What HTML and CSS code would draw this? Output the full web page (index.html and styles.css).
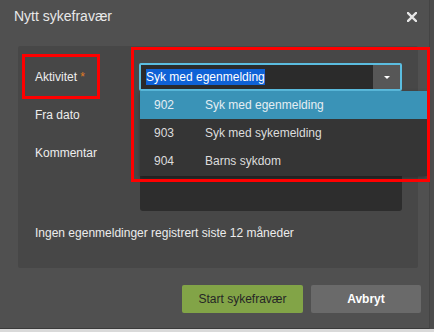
FILE: index.html
```html
<!DOCTYPE html>
<html lang="no">
<head>
  <meta charset="utf-8" />
  <title>Nytt sykefravær</title>
  <link rel="stylesheet" href="styles.css">
</head>
<body>
  <div class="dialog">
    <div class="dialog-header">
      <span class="dialog-title">Nytt sykefravær</span>
      <span class="dialog-close">
        <svg width="10" height="10" viewBox="0 0 10 10"><path d="M1 1 L9 9 M9 1 L1 9" stroke="#e6e6e6" stroke-width="2.4" stroke-linecap="square"/></svg>
      </span>
    </div>

    <div class="dialog-body">
      <div class="form">
        <div class="field-label">Aktivitet <span class="req">*</span></div>
        <div class="select-wrap">
          <div class="select">
            <span class="select-value"><span class="sel">Syk med egenmelding</span></span>
            <span class="select-btn"><span class="caret"></span></span>
          </div>
          <ul class="options">
            <li class="option active"><span class="code">902</span>Syk med egenmelding</li>
            <li class="option"><span class="code">903</span>Syk med sykemelding</li>
            <li class="option"><span class="code">904</span>Barns sykdom</li>
          </ul>
        </div>

        <div class="field-label">Fra dato</div>
        <div class="input"></div>

        <div class="field-label top">Kommentar</div>
        <div class="textarea"></div>
      </div>
      <p class="note">Ingen egenmeldinger registrert siste 12 måneder</p>
    </div>

    <div class="dialog-footer">
      <button class="btn btn-ok">Start sykefravær</button>
      <button class="btn btn-cancel">Avbryt</button>
    </div>

    <!-- annotation boxes -->
    <div class="mark mark-label"></div>
    <div class="mark mark-list"></div>
  </div>
</body>
</html>
```

FILE: styles.css
```css
* {
  margin: 0;
  padding: 0;
  box-sizing: border-box;
}

body {
  width: 434px;
  height: 332px;
  overflow: hidden;
  font-family: "Liberation Sans", Arial, sans-serif;
  font-size: 12px;
  color: #ececec;
  background: linear-gradient(to bottom, #4c4c4c 329px, #d9d9d9 329px);
}

.dialog {
  position: relative;
  width: 430px;
  height: 329px;
  background-color: #505050;
  border-right: 1px solid #444;
  border-bottom: 1px solid #3a3a3a;
}

.dialog-header {
  height: 46px;
  display: flex;
  justify-content: space-between;
  align-items: flex-start;
  padding: 6px 12px 0 14px;
}

.dialog-title {
  font-size: 14px;
  line-height: 20px;
  color: #e8e8e8;
}

.dialog-close {
  display: flex;
  margin-top: 6px;
}

.dialog-body {
  margin-left: 18px;
  width: 400px;
  height: 222px;
  background-color: #474747;
  border-radius: 2px;
  padding: 17px 0 0 17px;
}

.form {
  display: grid;
  grid-template-columns: 105px 262px;
  row-gap: 10px;
}

.field-label {
  line-height: 28px;
  color: #eeeeee;
}

.field-label.top {
  line-height: 15px;
  padding-top: 7px;
}

.req {
  color: #e07b24;
}

.select-wrap {
  position: relative;
  margin-left: -1px;
}

.select {
  height: 28px;
  display: flex;
  background-color: #2b2b2b;
  border: 2px solid #5bbde0;
  border-radius: 2px;
}

.select-value {
  flex: 1;
  padding-left: 5px;
  line-height: 24px;
}

.sel {
  background-color: #0f62d6;
  color: #fff;
  padding: 1px 0;
}

.select-btn {
  width: 27px;
  background-color: #575757;
  display: flex;
  align-items: center;
  justify-content: center;
}

.caret {
  width: 0;
  height: 0;
  border-left: 3px solid transparent;
  border-right: 3px solid transparent;
  border-top: 3px solid #fff;
}

.options {
  list-style: none;
  position: absolute;
  top: 28px;
  left: 1px;
  width: 287px;
  background-color: #353535;
  padding-bottom: 1px;
  box-shadow: 0 2px 4px rgba(0, 0, 0, 0.35);
  z-index: 2;
}

.option {
  height: 28px;
  line-height: 28px;
  padding-left: 14px;
  color: #dddddd;
}

.option.active {
  background-color: #3a93b7;
  color: #e4eef3;
}

.code {
  display: inline-block;
  width: 51px;
}

.input {
  height: 28px;
  background-color: #2d2d2d;
  border-radius: 2px;
}

.textarea {
  height: 72px;
  background-color: #2d2d2d;
  border-radius: 3px;
}

.note {
  margin-top: 15px;
  line-height: 15px;
  color: #ececec;
}

.dialog-footer {
  display: flex;
  justify-content: flex-end;
  gap: 8px;
  padding: 17px 8px 0 0;
}

.btn {
  height: 28px;
  border: none;
  border-radius: 2px;
  font-family: "Liberation Sans", Arial, sans-serif;
  font-size: 12px;
}

.btn-ok {
  width: 121px;
  background-color: #82a447;
  color: #262626;
}

.btn-cancel {
  width: 110px;
  background-color: #6a6a6a;
  color: #fff;
  font-weight: bold;
}

.mark {
  position: absolute;
  border: 3px solid #ff0000;
  z-index: 5;
}

.mark-label {
  left: 22px;
  top: 54px;
  width: 78px;
  height: 45px;
}

.mark-list {
  left: 131px;
  top: 47px;
  width: 299px;
  height: 135px;
}
```
